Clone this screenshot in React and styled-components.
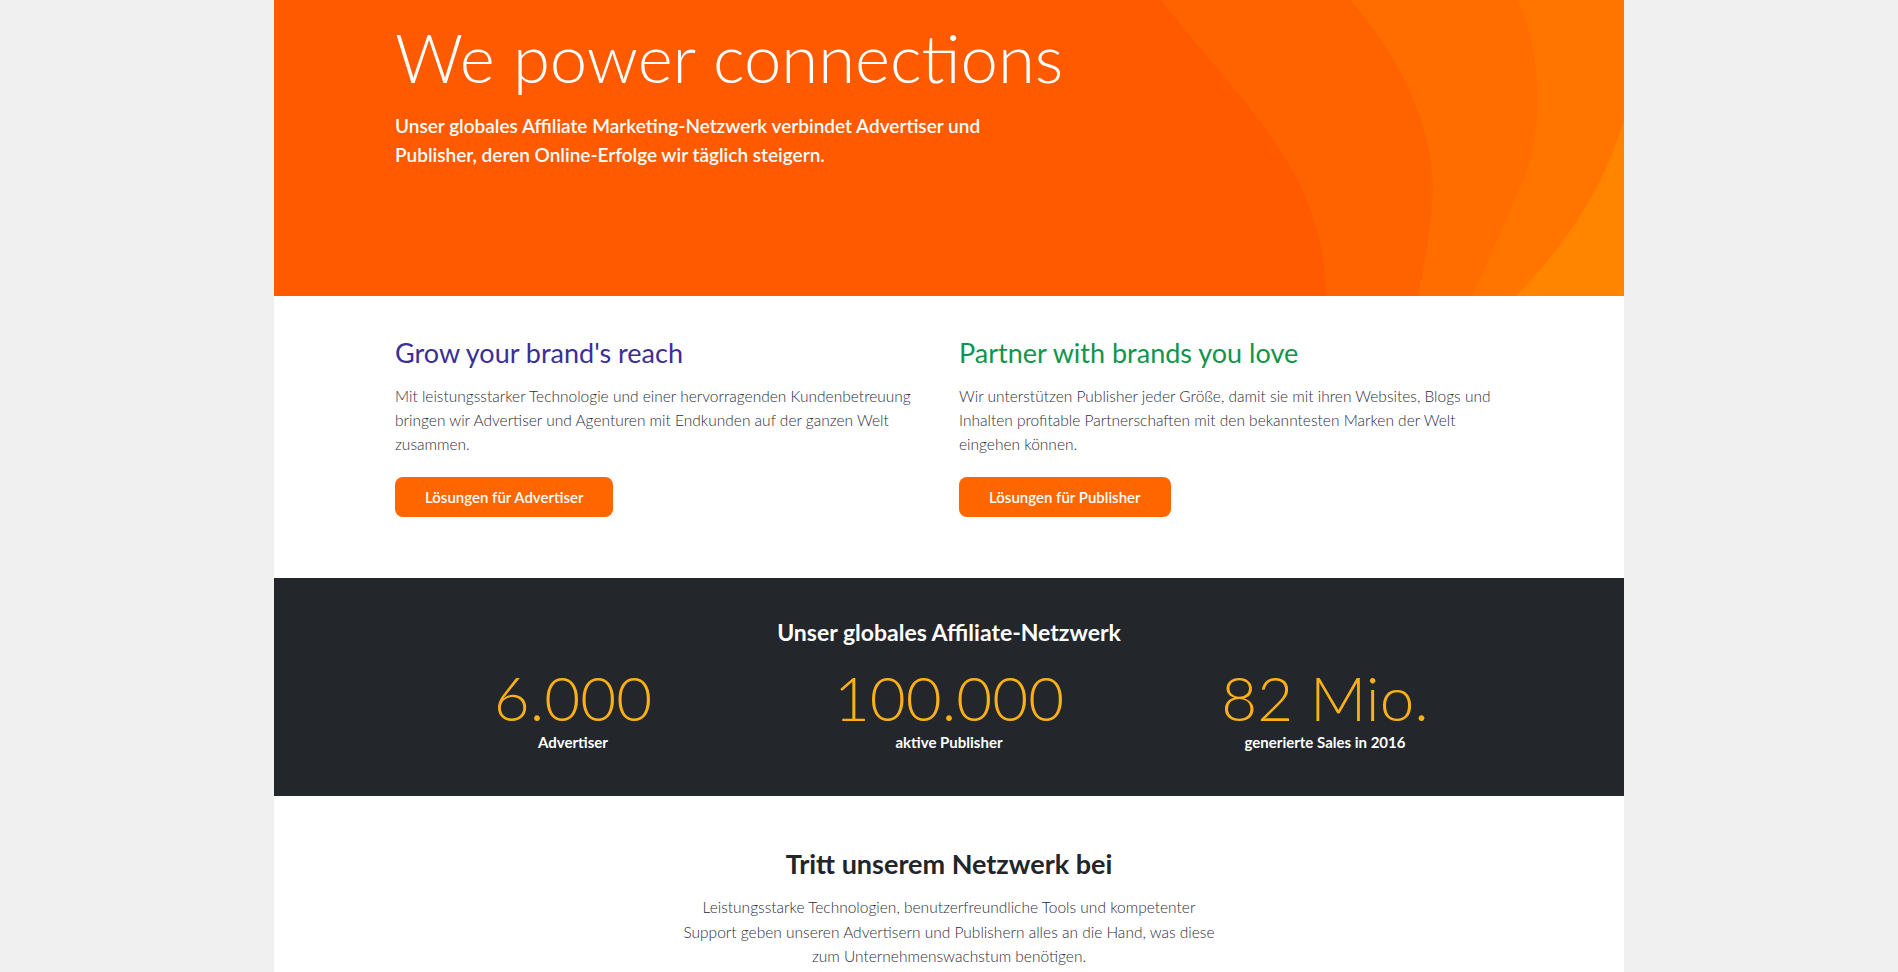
import React from 'react';
import styled, { createGlobalStyle } from 'styled-components';

const GlobalStyle = createGlobalStyle`
    body {
        margin: 0;
        background: #f0f0f0;
        font-family: Lato, "Open Sans", sans-serif;
    }
`;

const stats = [
    { value: '6.000', label: 'Advertiser' },
    { value: '100.000', label: 'aktive Publisher' },
    { value: '82 Mio.', label: 'generierte Sales in 2016' },
];

const Waves = () => (
    <WaveSvg viewBox="0 0 1350 296" preserveAspectRatio="none">
        <path fill="#ff6300" d="M887 0 C960 95 1052 170 1052 296 L1350 296 L1350 0 Z" />
        <path fill="#ff6c00" d="M1076 0 C1130 60 1165 140 1158 205 C1155 240 1150 268 1144 296 L1350 296 L1350 0 Z" />
        <path fill="#ff7500" d="M1244 0 C1270 60 1272 140 1240 200 C1226 235 1212 265 1198 296 L1350 296 L1350 0 Z" />
        <path fill="#ff8400" d="M1350 120 Q1322 215 1242 296 L1350 296 Z" />
    </WaveSvg>
);

const App = () => {
    return (
        <Page>
            <GlobalStyle />
            <Hero>
                <Waves />
                <HeroInner>
                    <HeroTitle>We power connections</HeroTitle>
                    <HeroLead>
                        Unser globales Affiliate Marketing-Netzwerk verbindet Advertiser und
                        Publisher, deren Online-Erfolge wir täglich steigern.
                    </HeroLead>
                </HeroInner>
            </Hero>

            <Intro>
                <Column>
                    <ColumnTitle color="#3b2f96">Grow your brand's reach</ColumnTitle>
                    <Text>
                        Mit leistungsstarker Technologie und einer hervorragenden Kundenbetreuung
                        bringen wir Advertiser und Agenturen mit Endkunden auf der ganzen Welt zusammen.
                    </Text>
                    <Button>Lösungen für Advertiser</Button>
                </Column>
                <Column>
                    <ColumnTitle color="#10954a">Partner with brands you love</ColumnTitle>
                    <Text>
                        Wir unterstützen Publisher jeder Größe, damit sie mit ihren Websites, Blogs und
                        Inhalten profitable Partnerschaften mit den bekanntesten Marken der Welt eingehen können.
                    </Text>
                    <Button>Lösungen für Publisher</Button>
                </Column>
            </Intro>

            <Stats>
                <StatsTitle>Unser globales Affiliate-Netzwerk</StatsTitle>
                <StatGrid>
                    {stats.map(s => (
                        <Stat key={s.label}>
                            <StatValue>{s.value}</StatValue>
                            <StatLabel>{s.label}</StatLabel>
                        </Stat>
                    ))}
                </StatGrid>
            </Stats>

            <Join>
                <JoinTitle>Tritt unserem Netzwerk bei</JoinTitle>
                <JoinText>
                    Leistungsstarke Technologien, benutzerfreundliche Tools und kompetenter
                    Support geben unseren Advertisern und Publishern alles an die Hand, was diese
                    zum Unternehmenswachstum benötigen.
                </JoinText>
            </Join>
        </Page>
    );
};

const Page = styled.div`
    width: 1350px;
    margin: 0 auto;
    background: #fff;
    min-height: 972px;
`;

const Hero = styled.section`
    position: relative;
    height: 296px;
    background: #ff5a00;
    overflow: hidden;
`;

const WaveSvg = styled.svg`
    position: absolute;
    top: 0;
    left: 0;
    width: 100%;
    height: 100%;
`;

const HeroInner = styled.div`
    position: relative;
    padding: 17px 0 0 121px;
    color: #fff;
`;

const HeroTitle = styled.h1`
    margin: 0;
    font-size: 67px;
    font-weight: 300;
    line-height: 1.2;
`;

const HeroLead = styled.p`
    margin: 14px 0 0;
    width: 620px;
    font-size: 19px;
    font-weight: 600;
    line-height: 29px;
`;

const Intro = styled.section`
    display: grid;
    grid-template-columns: 540px 540px;
    column-gap: 24px;
    padding: 41px 0 61px 121px;
`;

const Column = styled.div`
    display: flex;
    flex-direction: column;
    align-items: flex-start;
`;

const ColumnTitle = styled.h2`
    margin: 0;
    font-size: 27px;
    font-weight: 400;
    line-height: 1.2;
    color: ${p => p.color};
`;

const Text = styled.p`
    margin: 15px 0 0;
    font-size: 15.5px;
    font-weight: 300;
    line-height: 24px;
    color: #2e2e3c;
`;

const Button = styled.button`
    margin-top: 21px;
    height: 40px;
    padding: 0 30px;
    border: 0;
    border-radius: 8px;
    background: #ff6600;
    color: #fff;
    font-family: inherit;
    font-size: 15px;
    font-weight: 600;
    cursor: pointer;
`;

const Stats = styled.section`
    background: #23272b;
    padding: 41px 0 44px;
    text-align: center;
    color: #fff;
`;

const StatsTitle = styled.h3`
    margin: 0;
    font-size: 23px;
    font-weight: 700;
    line-height: 1.2;
`;

const StatGrid = styled.div`
    display: grid;
    grid-template-columns: repeat(3, 376px);
    justify-content: center;
    margin-top: 19px;
`;

const Stat = styled.div`
    display: flex;
    flex-direction: column;
    align-items: center;
    gap: 4px;
`;

const StatValue = styled.div`
    font-size: 62px;
    font-weight: 300;
    line-height: 1;
    color: #fbb017;
`;

const StatLabel = styled.div`
    font-size: 15px;
    font-weight: 700;
    line-height: 20px;
`;

const Join = styled.section`
    padding: 52px 0 40px;
    text-align: center;
`;

const JoinTitle = styled.h2`
    margin: 0;
    font-size: 27px;
    font-weight: 700;
    line-height: 1.2;
    color: #22252a;
`;

const JoinText = styled.p`
    margin: 15px auto 0;
    max-width: 540px;
    font-size: 15.5px;
    font-weight: 300;
    line-height: 24.5px;
    color: #2e2e3c;
`;

export default App;
